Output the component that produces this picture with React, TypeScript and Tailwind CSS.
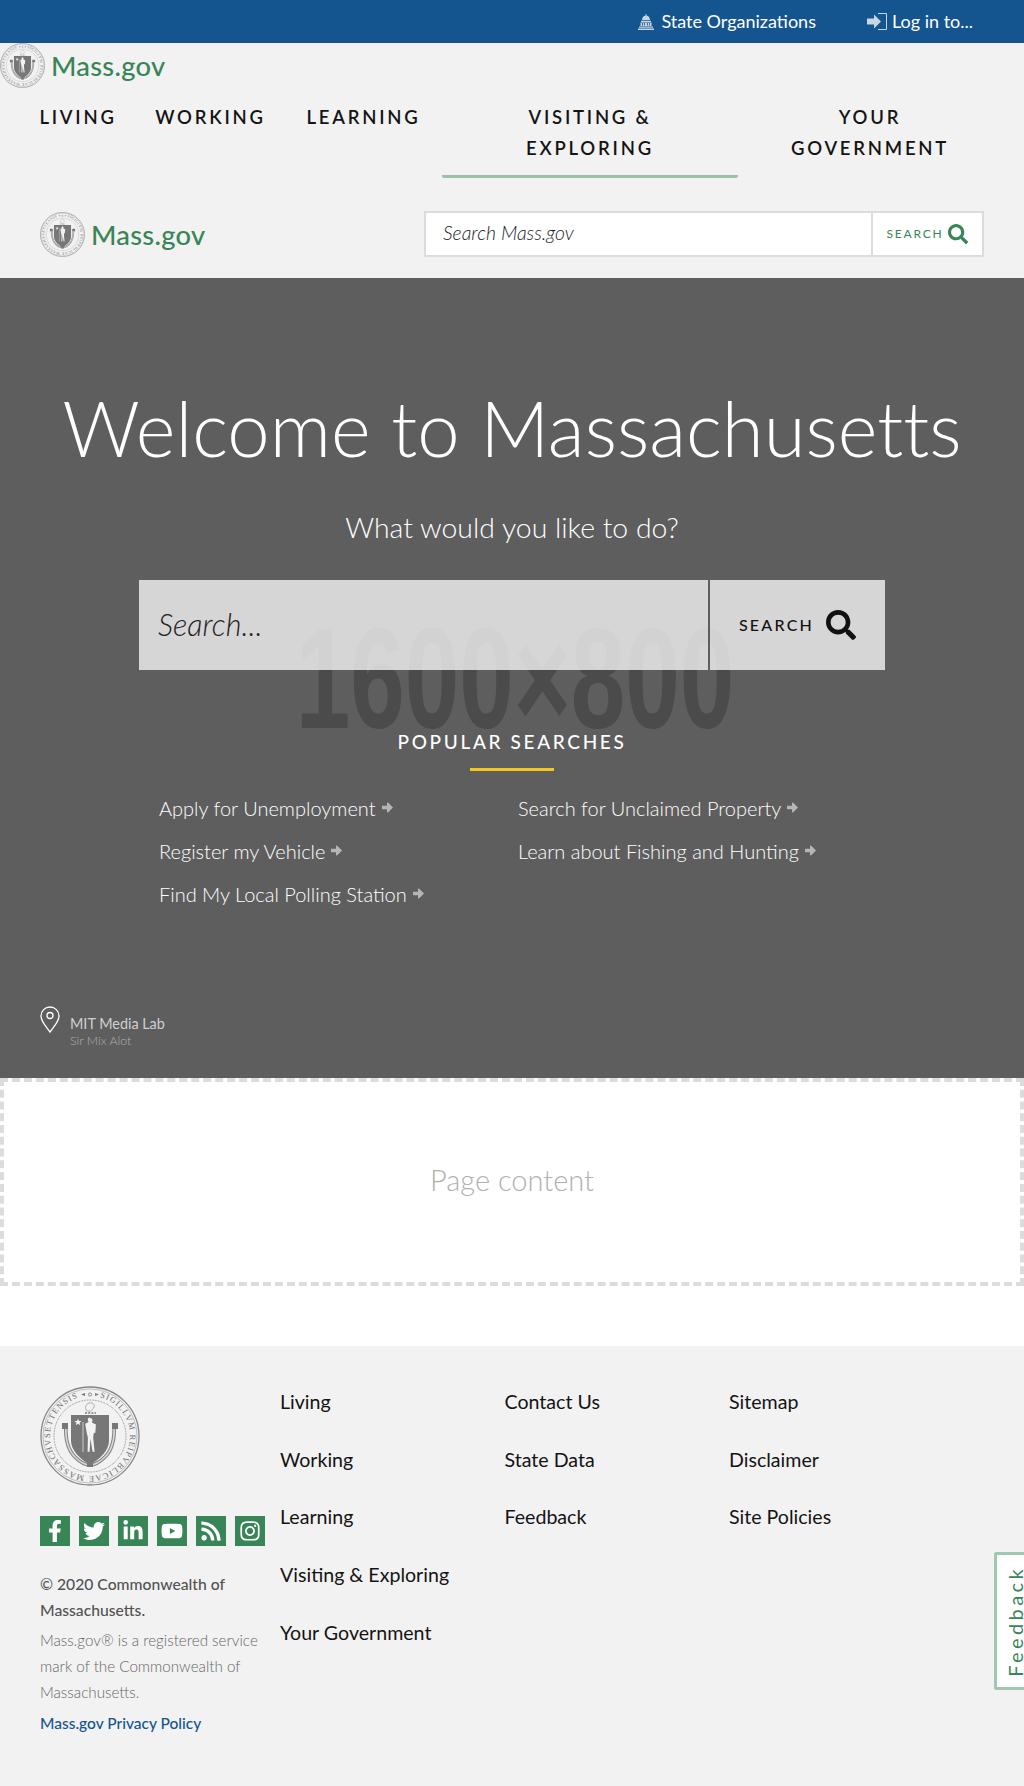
import { FaFacebookF, FaTwitter, FaLinkedinIn, FaYoutube, FaRss, FaInstagram, FaSearch } from "react-icons/fa";

const font = "font-['Lato','Noto_Sans',sans-serif]";

function Seal({ id, className }: { id: string; className: string }) {
  return (
    <svg viewBox="0 0 100 100" className={className}>
      <circle cx="50" cy="50" r="49" fill="#f2f2f2" stroke="#868686" strokeWidth="1.3" />
      <circle cx="50" cy="50" r="47" fill="none" stroke="#9a9a9a" strokeWidth="0.6" />
      <circle cx="50" cy="50" r="36" fill="none" stroke="#868686" strokeWidth="1" strokeDasharray="0.8 0.8" />
      <path id={id} d="M50 10a40 40 0 1 1-.01 0" fill="none" />
      <text fontFamily="Liberation Serif, serif" fontSize="8.4" fill="#6e6e6e">
        <textPath href={`#${id}`} startOffset="10" textLength="228">
          SIGILLVM REIPVBLICAE MASSACHVSETTENSIS
        </textPath>
      </text>
      {/* top ornament */}
      <path d="M41 8.500l4-1.500v3zM59 8.500l-4-1.500v3z" fill="#777" />
      <circle cx="50" cy="8.500" r="1.600" fill="none" stroke="#777" strokeWidth="0.8" />
      {/* crest */}
      <path d="M47 25c-3-3-1-7 2-8 3-1 6 1 5 4-1 2-2 3-3 4z" fill="none" stroke="#a5a5a5" strokeWidth="0.9" />
      <path d="M45 27h11" stroke="#777" strokeWidth="1.400" strokeDasharray="2 1.200" />
      {/* ribbon */}
      <path d="M26 38c-1 15 2 26 9 33 5 5 10 8 15 8s10-3 15-8c7-7 10-18 9-33" fill="none" stroke="#808080" strokeWidth="3.600" />
      <path d="M26 38c-1 15 2 26 9 33 5 5 10 8 15 8s10-3 15-8c7-7 10-18 9-33" fill="none" stroke="#d8d8d8" strokeWidth="1.600" />
      <path d="M22 37h6v6h-6zM72 37h6v6h-6zM47 77h6v4h-6z" fill="#777" />
      {/* shield */}
      <path d="M31 29h38v26c0 9-9 18-19 24-10-6-19-15-19-24z" fill="#777" />
      <path d="M38 32.500l1 2.500 2.600.1-2 1.600.7 2.500-2.300-1.400-2.200 1.400.7-2.500-2-1.600 2.600-.1z" fill="#f2f2f2" />
      {/* figure */}
      <path d="M50 32c1.700 0 2.600 1.300 2.400 2.900l-.5 1.700 4 1.900-.6 8.500-1.500-.3-.6 5 1.400 14h-2l-2.200-13-.8 13h-2l.3-14-1.300-5.500-1.400-8.500 3.400-1.800-.7-1.500c-.3-1.600.500-2.900 2.100-2.900z" fill="#f2f2f2" />
      <path d="M43 36v30" stroke="#f2f2f2" strokeWidth="0.7" />
    </svg>
  );
}

function Logo({ id }: { id: string }) {
  return (
    <div className="flex items-center gap-[6px]">
      <Seal id={id} className="w-[45px] h-[45px] shrink-0" />
      <span className="text-[27.3px] leading-[45px] text-[#388557] font-medium tracking-[0.01em]">Mass.gov</span>
    </div>
  );
}

function CapitolIcon() {
  return (
    <svg viewBox="0 0 16 16" className="w-[16px] h-[16px] fill-[#c8d6e3]">
      <path d="M7.600 0h.8v1.500C10.500 1.800 11.800 3.300 12 6H4c.2-2.700 1.500-4.200 3.600-4.500z" />
      <path d="M3 6.800h10v1.200H3zM2.500 8.500h11v3.500h-11zM1 12.500h14v1.200H1zM0 14.400h16V16H0z" />
      <path d="M4 9h.8v2.500H4zM6 9h.8v2.500H6zM9.200 9h.8v2.500h-.8zM11.200 9h.8v2.500h-.8z" fill="#14558f" />
    </svg>
  );
}

function LoginIcon() {
  return (
    <svg viewBox="0 0 20 17" className="w-[20px] h-[17px]">
      <path d="M0 5.500h7V1.500L14 8.500l-7 7v-4H0z" fill="#c8d6e3" />
      <path d="M11 .5h8.500v16H11" fill="none" stroke="#c8d6e3" strokeWidth="1" />
    </svg>
  );
}

function PinIcon() {
  return (
    <svg viewBox="0 0 20 27" className="w-[20px] h-[27px]" fill="none" stroke="#fff" strokeWidth="1.300">
      <path d="M10 26C6 20.500 1 15.500 1 10a9 9 0 0 1 18 0c0 5.500-5 10.500-9 16z" />
      <circle cx="10" cy="9.500" r="3" />
    </svg>
  );
}

function ChunkyArrow() {
  return (
    <svg viewBox="0 0 11 11" className="w-[11px] h-[11px] fill-[#b5b5b5]">
      <path d="M0 3.800h5V.8l1-.3 5 5-5 5-1-.3V7.200H0z" />
    </svg>
  );
}

function PopularLink({ label }: { label: string }) {
  return (
    <a className="flex items-center gap-[6px] h-[43px] text-[20px] font-light text-white whitespace-nowrap">
      {label}
      <ChunkyArrow />
    </a>
  );
}

const navItems = [
  { lines: ["LIVING"], width: "w-[116px]" },
  { lines: ["WORKING"], width: "w-[149px]" },
  { lines: ["LEARNING"], width: "w-[157px]" },
  { lines: ["VISITING &", "EXPLORING"], width: "w-[296px]", active: true },
  { lines: ["YOUR", "GOVERNMENT"], width: "w-[264px]" },
];

const socials = [FaFacebookF, FaTwitter, FaLinkedinIn, FaYoutube, FaRss, FaInstagram];

const footerCols = [
  ["Living", "Working", "Learning", "Visiting & Exploring", "Your Government"],
  ["Contact Us", "State Data", "Feedback"],
  ["Sitemap", "Disclaimer", "Site Policies"],
];

export default function App() {
  return (
    <div className={`relative w-[1024px] h-[1786px] overflow-hidden bg-white ${font}`}>
      {/* top bar */}
      <div className="flex justify-end items-center h-[43px] bg-[#14558f] text-white text-[18px] pr-[51px]">
        <div className="flex items-center gap-[7px] mr-[51px]">
          <CapitolIcon />
          <span>State Organizations</span>
        </div>
        <div className="flex items-center gap-[5px]">
          <LoginIcon />
          <span>Log in to...</span>
        </div>
      </div>

      {/* header */}
      <div className="h-[235px] bg-[#f2f2f2]">
        <Logo id="seal-a" />
        <nav className="flex pl-5 pt-[14px] h-[90px] text-[18.5px] leading-[31px] font-semibold tracking-[0.15em] text-[#141414]">
          {navItems.map((item) => (
            <div
              key={item.lines[0]}
              className={`${item.width} text-center h-[76px] ${item.active ? "border-b-[3px] border-[#9bc2a9] rounded-b-[2px]" : ""}`}
            >
              {item.lines.map((line) => (
                <div key={line}>{line}</div>
              ))}
            </div>
          ))}
        </nav>
        <div className="flex items-center justify-between pl-10 pr-10 pt-[33px]">
          <Logo id="seal-b" />
          <div className="flex w-[560px] h-[46px] border-2 border-[#dcdcdc] bg-white">
            <div className="flex-1 flex items-center pl-[17px] pb-[2px] text-[19.4px] font-light italic text-[#222]">Search Mass.gov</div>
            <div className="flex items-center justify-center gap-[5px] w-[111px] border-l-2 border-[#dcdcdc] text-[12px] tracking-[0.15em] text-[#388557]">
              SEARCH
              <FaSearch className="w-[20px] h-[20px]" />
            </div>
          </div>
        </div>
      </div>

      {/* hero */}
      <section className="relative h-[800px] bg-[#5e5e5e] text-white">
        <div className="absolute left-[298px] top-[336px] w-[434px] h-[130px] flex items-center justify-center scale-x-[0.69] font-['Liberation_Sans',sans-serif] font-bold text-[142px] leading-none text-[#4b4b4b] whitespace-nowrap">
          1600×800
        </div>
        <div className="relative flex flex-col items-center pt-[100px]">
          <h1 className="text-[76px] leading-[100px] font-light whitespace-nowrap [font-variant-ligatures:none]">Welcome to Massachusetts</h1>
          <p className="mt-[31px] text-[28.4px] leading-[36px] font-light">What would you like to do?</p>
          <div className="flex w-[746px] h-[90px] mt-[35px] bg-white/75 text-[#111]">
            <div className="flex-1 flex items-center pl-[19px] text-[30.5px] font-light italic text-[#222]">Search...</div>
            <div className="flex items-center justify-center gap-[12px] w-[177px] border-l-2 border-[#5e5e5e] text-[16px] font-medium tracking-[0.14em]">
              SEARCH
              <FaSearch className="w-[30px] h-[30px]" />
            </div>
          </div>
          <h2 className="mt-[60px] text-[19px] leading-[24px] font-medium tracking-[0.14em]">POPULAR SEARCHES</h2>
          <div className="w-[84px] h-[3px] mt-[14px] bg-[#f6c51b]" />
          <div className="flex self-start pl-[159px] mt-[15px]">
            <div className="w-[359px]">
              <PopularLink label="Apply for Unemployment" />
              <PopularLink label="Register my Vehicle" />
              <PopularLink label="Find My Local Polling Station" />
            </div>
            <div>
              <PopularLink label="Search for Unclaimed Property" />
              <PopularLink label="Learn about Fishing and Hunting" />
            </div>
          </div>
        </div>
        <div className="absolute left-10 top-[728px] flex gap-[10px]">
          <PinIcon />
          <div className="pt-[9px]">
            <div className="text-[14.4px] leading-[18px] text-[#cfcfcf]">MIT Media Lab</div>
            <div className="text-[12.4px] leading-[16px] font-light text-[#b0b0b0]">Sir Mix Alot</div>
          </div>
        </div>
      </section>

      {/* page content */}
      <div className="flex items-center justify-center h-[208px] pb-[5px] border-4 border-dashed border-[#dcdcdc] text-[29px] font-light text-[#b0b0b0]">
        Page content
      </div>
      <div className="h-[60px]" />

      {/* footer */}
      <footer className="flex h-[440px] pl-10 bg-[#f2f2f2]">
        <div className="w-[240px] pt-[40px] pr-[6px]">
          <Seal id="seal-c" className="w-[100px] h-[100px]" />
          <div className="flex gap-[9px] mt-[30px]">
            {socials.map((Icon, i) => (
              <div key={i} className="flex items-center justify-center w-[30px] h-[30px] bg-[#388557] text-white">
                <Icon className="w-[22px] h-[22px]" />
              </div>
            ))}
          </div>
          <p className="mt-[25px] text-[15.7px] leading-[26px] font-medium text-[#535353]">© 2020 Commonwealth of Massachusetts.</p>
          <p className="mt-[4px] text-[15.2px] leading-[26px] font-light text-[#666]">Mass.gov® is a registered service mark of the Commonwealth of Massachusetts.</p>
          <a className="block mt-[5px] text-[15.5px] leading-[26px] font-medium text-[#14558f]">Mass.gov Privacy Policy</a>
        </div>
        {footerCols.map((col, i) => (
          <ul key={i} className="w-[224.5px] pt-[27px]">
            {col.map((link) => (
              <li key={link} className="h-[57.7px] text-[19.6px] leading-[58px] text-[#141414] whitespace-nowrap">{link}</li>
            ))}
          </ul>
        ))}
      </footer>

      {/* feedback tab */}
      <div className="absolute right-0 top-[1552px] flex items-center w-[30px] h-[138px] pl-[8px] bg-white border-[3px] border-r-0 border-[#a0c8b0] rounded-l-[3px] overflow-hidden">
        <span className="[writing-mode:vertical-rl] rotate-180 text-[20px] leading-none tracking-[0.17em] text-[#388557] whitespace-nowrap">Feedback</span>
      </div>
    </div>
  );
}
